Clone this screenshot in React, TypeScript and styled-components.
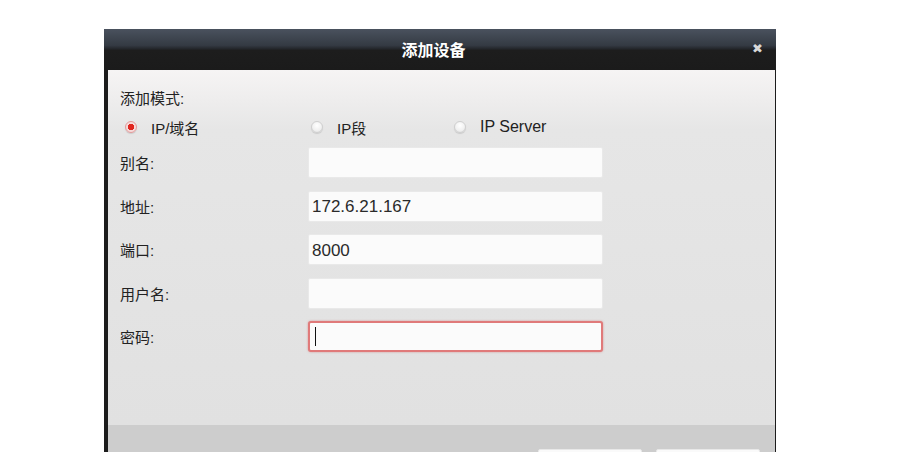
import React from "react";
import styled, { createGlobalStyle } from "styled-components";

const Global = createGlobalStyle`
  html, body { margin: 0; padding: 0; background: #ffffff; }
  body { font-family: "Liberation Sans", Arial, "Noto Sans CJK SC", sans-serif; }
`;

const Page = styled.div`
  width: 900px;
  height: 470px;
  padding: 29px 0 0 104px;
  box-sizing: border-box;
  background: #fff;
`;

const Clip = styled.div`
  width: 672px;
  height: 423px;
  overflow: hidden;
`;

const Dialog = styled.div`
  width: 672px;
  display: flex;
  flex-direction: column;
  background: #1c1c1c;
`;

const TitleBar = styled.div`
  height: 41px;
  display: flex;
  align-items: center;
  justify-content: center;
  position: relative;
  background: linear-gradient(#4a525e 0%, #343a43 40%, #24272c 48%, #1d1d1d 52%, #1b1b1b 100%);
`;

const Title = styled.div`
  color: #ffffff;
  font-weight: bold;
  font-size: 16px;
  font-family: "Noto Sans CJK SC", sans-serif;
  margin-right: 13px;
  margin-top: -1px;
`;

const Close = styled.div`
  position: absolute;
  right: 13px;
  top: 12px;
  color: #d8d8d8;
  font-weight: bold;
  font-size: 13px;
  font-family: "DejaVu Sans", sans-serif;
`;

const Body = styled.div`
  margin-left: 4px;
  margin-right: 1px;
  height: 355px;
  box-sizing: border-box;
  background: linear-gradient(#f6f4f4 0px, #e6e6e6 60px, #e1e1e1 100%);
  padding: 19px 0 0 12px;
  display: flex;
  flex-direction: column;
`;

const Footer = styled.div`
  margin-left: 4px;
  margin-right: 1px;
  height: 60px;
  background: #cdcdcd;
  display: flex;
  justify-content: flex-end;
  gap: 14px;
  padding: 24px 15px 0 0;
`;

const FooterButton = styled.div`
  width: 102px;
  height: 26px;
  background: #fafafa;
  border-radius: 2px;
  border: 1px solid #e8e8e8;
`;

const Text = styled.span`
  font-family: "Liberation Sans", Arial, "Noto Sans CJK SC", sans-serif;
  font-size: 15px;
  color: #222;
`;

const LatinText = styled(Text)`
  font-size: 16px;
`;

const ModeLabel = styled(Text)`
  line-height: 20px;
`;

const RadioRow = styled.div`
  display: flex;
  align-items: center;
  height: 22px;
  margin-top: 7px;
  margin-bottom: 9px;
`;

const RadioItem = styled.div<{ $w: number }>`
  width: ${(p) => p.$w}px;
  display: flex;
  align-items: center;
  gap: 14px;
`;

const RadioDot = styled.span<{ $on?: boolean }>`
  width: 12px;
  height: 12px;
  border-radius: 50%;
  box-sizing: border-box;
  margin-left: 5px;
  border: 1px solid ${(p) => (p.$on ? "#e39a9a" : "#cfcfcf")};
  background: ${(p) =>
    p.$on
      ? "radial-gradient(circle, #e0261f 0 3px, #f6dada 3.5px 100%)"
      : "radial-gradient(circle at 50% 35%, #ffffff 0, #f0f0f0 60%, #dedede 100%)"};
  box-shadow: 0 1px 1px rgba(0, 0, 0, 0.12);
`;

const Field = styled.div`
  display: flex;
  align-items: center;
  height: 31px;
  margin-bottom: 12.5px;
`;

const Label = styled(Text)`
  width: 188px;
`;

const Input = styled.div<{ $focus?: boolean }>`
  width: 295px;
  height: 31px;
  box-sizing: border-box;
  background: #fbfbfb;
  border: ${(p) => (p.$focus ? "2px solid #e07a7a" : "1px solid #e9e9e9")};
  border-radius: ${(p) => (p.$focus ? "3px" : "2px")};
  box-shadow: ${(p) => (p.$focus ? "0 0 2px rgba(210,60,60,0.5)" : "none")};
  display: flex;
  align-items: center;
  padding: 2px 0 0 ${(p) => (p.$focus ? "4px" : "3px")};
  font-family: "Liberation Sans", Arial, sans-serif;
  font-size: 17px;
  color: #2a2a2a;
`;

const Caret = styled.span`
  width: 1px;
  height: 19px;
  background: #111;
  margin-left: 1px;
  margin-top: -2px;
`;

const fields: { label: string; value?: string; focus?: boolean }[] = [
  { label: "别名:" },
  { label: "地址:", value: "172.6.21.167" },
  { label: "端口:", value: "8000" },
  { label: "用户名:" },
  { label: "密码:", focus: true },
];

export default function App() {
  return (
    <>
      <Global />
      <Page>
        <Clip>
          <Dialog>
            <TitleBar>
              <Title>添加设备</Title>
              <Close>✖</Close>
            </TitleBar>
            <Body>
              <ModeLabel>添加模式:</ModeLabel>
              <RadioRow>
                <RadioItem $w={186}>
                  <RadioDot $on />
                  <Text>IP/域名</Text>
                </RadioItem>
                <RadioItem $w={143}>
                  <RadioDot />
                  <Text>IP段</Text>
                </RadioItem>
                <RadioItem $w={150}>
                  <RadioDot />
                  <LatinText>IP Server</LatinText>
                </RadioItem>
              </RadioRow>
              {fields.map((f) => (
                <Field key={f.label}>
                  <Label>{f.label}</Label>
                  <Input $focus={f.focus}>
                    {f.value}
                    {f.focus && <Caret />}
                  </Input>
                </Field>
              ))}
            </Body>
            <Footer>
              <FooterButton />
              <FooterButton />
            </Footer>
          </Dialog>
        </Clip>
      </Page>
    </>
  );
}
